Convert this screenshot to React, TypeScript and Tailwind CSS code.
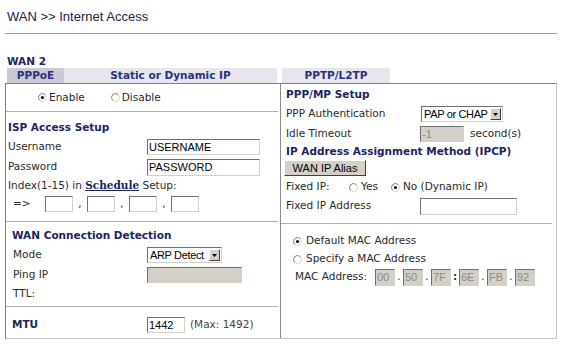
import React from "react";

const inset =
  "border border-t-[#707070] border-l-[#707070] border-r-[#d4d0c8] border-b-[#d4d0c8]";

function Radio({ checked }: { checked?: boolean }) {
  return (
    <svg width="9" height="9" viewBox="0 0 9 9" className="shrink-0">
      <circle cx="4.5" cy="4.5" r="4" fill="#fff" />
      <path d="M1.67 7.33 A4 4 0 0 1 7.33 1.67" fill="none" stroke="#7a7a7a" strokeWidth="1" />
      <path d="M7.33 1.67 A4 4 0 0 1 1.67 7.33" fill="none" stroke="#d4d0c8" strokeWidth="1" />
      {checked && <circle cx="4.5" cy="4.5" r="1.6" fill="#000" />}
    </svg>
  );
}

function Field({
  className,
  value,
  disabled,
}: {
  className: string;
  value?: string;
  disabled?: boolean;
}) {
  return (
    <div
      className={`${inset} ${className} ${
        disabled ? "bg-[#d4d0c8] text-[#8a8a8a]" : "bg-white text-black"
      } flex items-center overflow-hidden whitespace-nowrap pl-[1px] font-['Liberation_Sans',Arial,sans-serif] text-[11px] leading-none`}
    >
      {value}
    </div>
  );
}

function Select({ className, value }: { className: string; value: string }) {
  return (
    <div
      className={`${inset} ${className} bg-white flex items-center whitespace-nowrap font-['Liberation_Sans',Arial,sans-serif] text-[11px] tracking-[-0.35px] leading-none text-black`}
    >
      <span className="flex-1 pl-[2px] whitespace-nowrap">{value}</span>
      <div className="w-[11px] h-[12px] mr-[1px] shrink-0 bg-[#d4d0c8] border border-t-white border-l-white border-r-[#404040] border-b-[#404040] flex items-center justify-center">
        <svg width="5" height="3" viewBox="0 0 5 3">
          <path d="M0 0 H5 L2.5 3 Z" fill="#000" />
        </svg>
      </div>
    </div>
  );
}

function Sep({ className }: { className: string }) {
  return <div className={`h-px bg-[#b0b0b0] ${className}`} />;
}

const heading = "font-bold text-[#1e2460]";

export default function App() {
  return (
    <div className="w-[564px] h-[351px] bg-white text-[#2a2a2a] font-['DejaVu_Sans',Verdana,sans-serif] text-[10.5px]">
      <div className="h-[33px] pl-[7px] pt-[9px] font-['Liberation_Sans',Arial,sans-serif] text-[13px] leading-[16px] text-[#22224a]">
        WAN &gt;&gt; Internet Access
      </div>
      <div className="ml-[5px] w-[552px] h-px bg-[#9a9a9a]" />

      <div className={`mt-[20px] h-[14px] leading-[14px] pl-[7px] ${heading}`}>WAN 2</div>

      <div className="flex h-[15px] ml-[7px] font-bold text-[#2b2f80] leading-[15px]">
        <div className="w-[57px] bg-[#cacad4] text-center">PPPoE</div>
        <div className="w-[213px] bg-[#e6e6ec] text-center">Static or Dynamic IP</div>
        <div className="w-[5px]" />
        <div className="w-[108px] bg-[#e6e6ec] text-center">PPTP/L2TP</div>
      </div>

      <div className="ml-[5px] w-[552px] h-[256px] flex border border-t-[#808080] border-l-[#808080] border-r-[#c4c4c4] border-b-[#c4c4c4]">
        {/* left column */}
        <div className="w-[275px] border-r border-r-[#8a8a8a] flex flex-col">
          <div className="h-[27px] flex items-center pl-[32px]">
            <Radio checked />
            <span className="ml-[2px]">Enable</span>
            <span className="ml-[26px]">
              <Radio />
            </span>
            <span className="ml-[2px]">Disable</span>
          </div>
          <Sep className="mr-[2px]" />

          <div className="pt-[6px] pb-[8px] pl-[2px]">
            <div className={`h-[19px] flex items-center ${heading}`}>ISP Access Setup</div>
            <div className="h-[20px] flex items-center">
              <span className="w-[139px]">Username</span>
              <Field className="w-[113px] h-[16px]" value="USERNAME" />
            </div>
            <div className="h-[20px] flex items-center">
              <span className="w-[139px]">Password</span>
              <Field className="w-[113px] h-[17px]" value="PASSWORD" />
            </div>
            <div className="h-[18px] flex items-center whitespace-pre">
              <span>Index(1-15) in </span>
              <span className="font-bold underline text-[#1e2460] font-['DejaVu_Serif',serif]">Schedule</span>
              <span> Setup:</span>
            </div>
            <div className="h-[18px] flex items-center pl-[4px]">
              <span className="w-[33px] pl-[1px]">=&gt;</span>
              <Field className="w-[28px] h-[16px]" />
              <span className="w-[14px] text-center">,</span>
              <Field className="w-[28px] h-[16px]" />
              <span className="w-[14px] text-center">,</span>
              <Field className="w-[28px] h-[16px]" />
              <span className="w-[14px] text-center">,</span>
              <Field className="w-[28px] h-[16px]" />
            </div>
          </div>
          <Sep className="mr-[2px]" />

          <div className="pt-[5px] pb-[3px] pl-[6px]">
            <div className={`h-[18px] flex items-center ${heading}`}>WAN Connection Detection</div>
            <div className="h-[20px] flex items-center">
              <span className="w-[135px] pl-[1px]">Mode</span>
              <Select className="w-[75px] h-[16px]" value="ARP Detect" />
            </div>
            <div className="h-[20px] flex items-center">
              <span className="w-[135px] pl-[1px]">Ping IP</span>
              <Field className="w-[95px] h-[16px]" disabled />
            </div>
            <div className="h-[18px] flex items-center">
              <span className="pl-[1px]">TTL:</span>
            </div>
          </div>
          <Sep className="mr-[2px]" />

          <div className="pt-[8px] pl-[6px]">
            <div className="h-[20px] flex items-center">
              <span className={`w-[135px] ${heading}`}>MTU</span>
              <Field className="w-[38px] h-[16px]" value="1442" />
              <span className="ml-[5px] text-[#444]">(Max: 1492)</span>
            </div>
          </div>
        </div>

        {/* right column */}
        <div className="flex-1 flex flex-col">
          <div className="pt-[2px] pb-[7px] pl-[5px]">
            <div className={`h-[18px] flex items-center ${heading}`}>PPP/MP Setup</div>
            <div className="h-[20px] flex items-center">
              <span className="w-[135px]">PPP Authentication</span>
              <Select className="w-[82px] h-[16px]" value="PAP or CHAP" />
            </div>
            <div className="h-[20px] flex items-center">
              <span className="w-[134px]">Idle Timeout</span>
              <Field className="w-[44px] h-[16px]" value="-1" disabled />
              <span className="ml-[6px]">second(s)</span>
            </div>
            <div className={`h-[16px] flex items-center ${heading}`}>
              IP Address Assignment Method (IPCP)
            </div>
            <div className="h-[18px] flex items-start">
              <div className="ml-[-2px] w-[82px] h-[16px] bg-[#d4d0c8] border border-t-white border-l-white border-r-[#404040] border-b-[#404040] flex items-center justify-center font-['Liberation_Sans',Arial,sans-serif] text-[11px] leading-none text-black">
                WAN IP Alias
              </div>
            </div>
            <div className="h-[18px] flex items-center">
              <span className="w-[63px]">Fixed IP:</span>
              <Radio />
              <span className="ml-[3px]">Yes</span>
              <span className="ml-[13px]">
                <Radio checked />
              </span>
              <span className="ml-[3px]">No (Dynamic IP)</span>
            </div>
            <div className="h-[20px] flex items-center">
              <span className="w-[134px]">Fixed IP Address</span>
              <Field className="w-[97px] h-[17px]" />
            </div>
          </div>
          <Sep className="mr-[4px]" />

          <div className="pt-[8px] pl-[12px]">
            <div className="h-[18px] flex items-center">
              <Radio checked />
              <span className="ml-[4px]">Default MAC Address</span>
            </div>
            <div className="h-[18px] flex items-center">
              <Radio />
              <span className="ml-[4px]">Specify a MAC Address</span>
            </div>
            <div className="h-[18px] flex items-center pl-[2px]">
              <span className="w-[80px]">MAC Address:</span>
              <Field className="w-[20px] h-[17px]" value="00" disabled />
              <span className="w-[8px] text-center">.</span>
              <Field className="w-[20px] h-[17px]" value="50" disabled />
              <span className="w-[8px] text-center">.</span>
              <Field className="w-[20px] h-[17px]" value="7F" disabled />
              <span className="w-[8px] text-center font-bold">:</span>
              <Field className="w-[20px] h-[17px]" value="6E" disabled />
              <span className="w-[8px] text-center">.</span>
              <Field className="w-[20px] h-[17px]" value="FB" disabled />
              <span className="w-[8px] text-center">.</span>
              <Field className="w-[20px] h-[17px]" value="92" disabled />
            </div>
          </div>
        </div>
      </div>
    </div>
  );
}
